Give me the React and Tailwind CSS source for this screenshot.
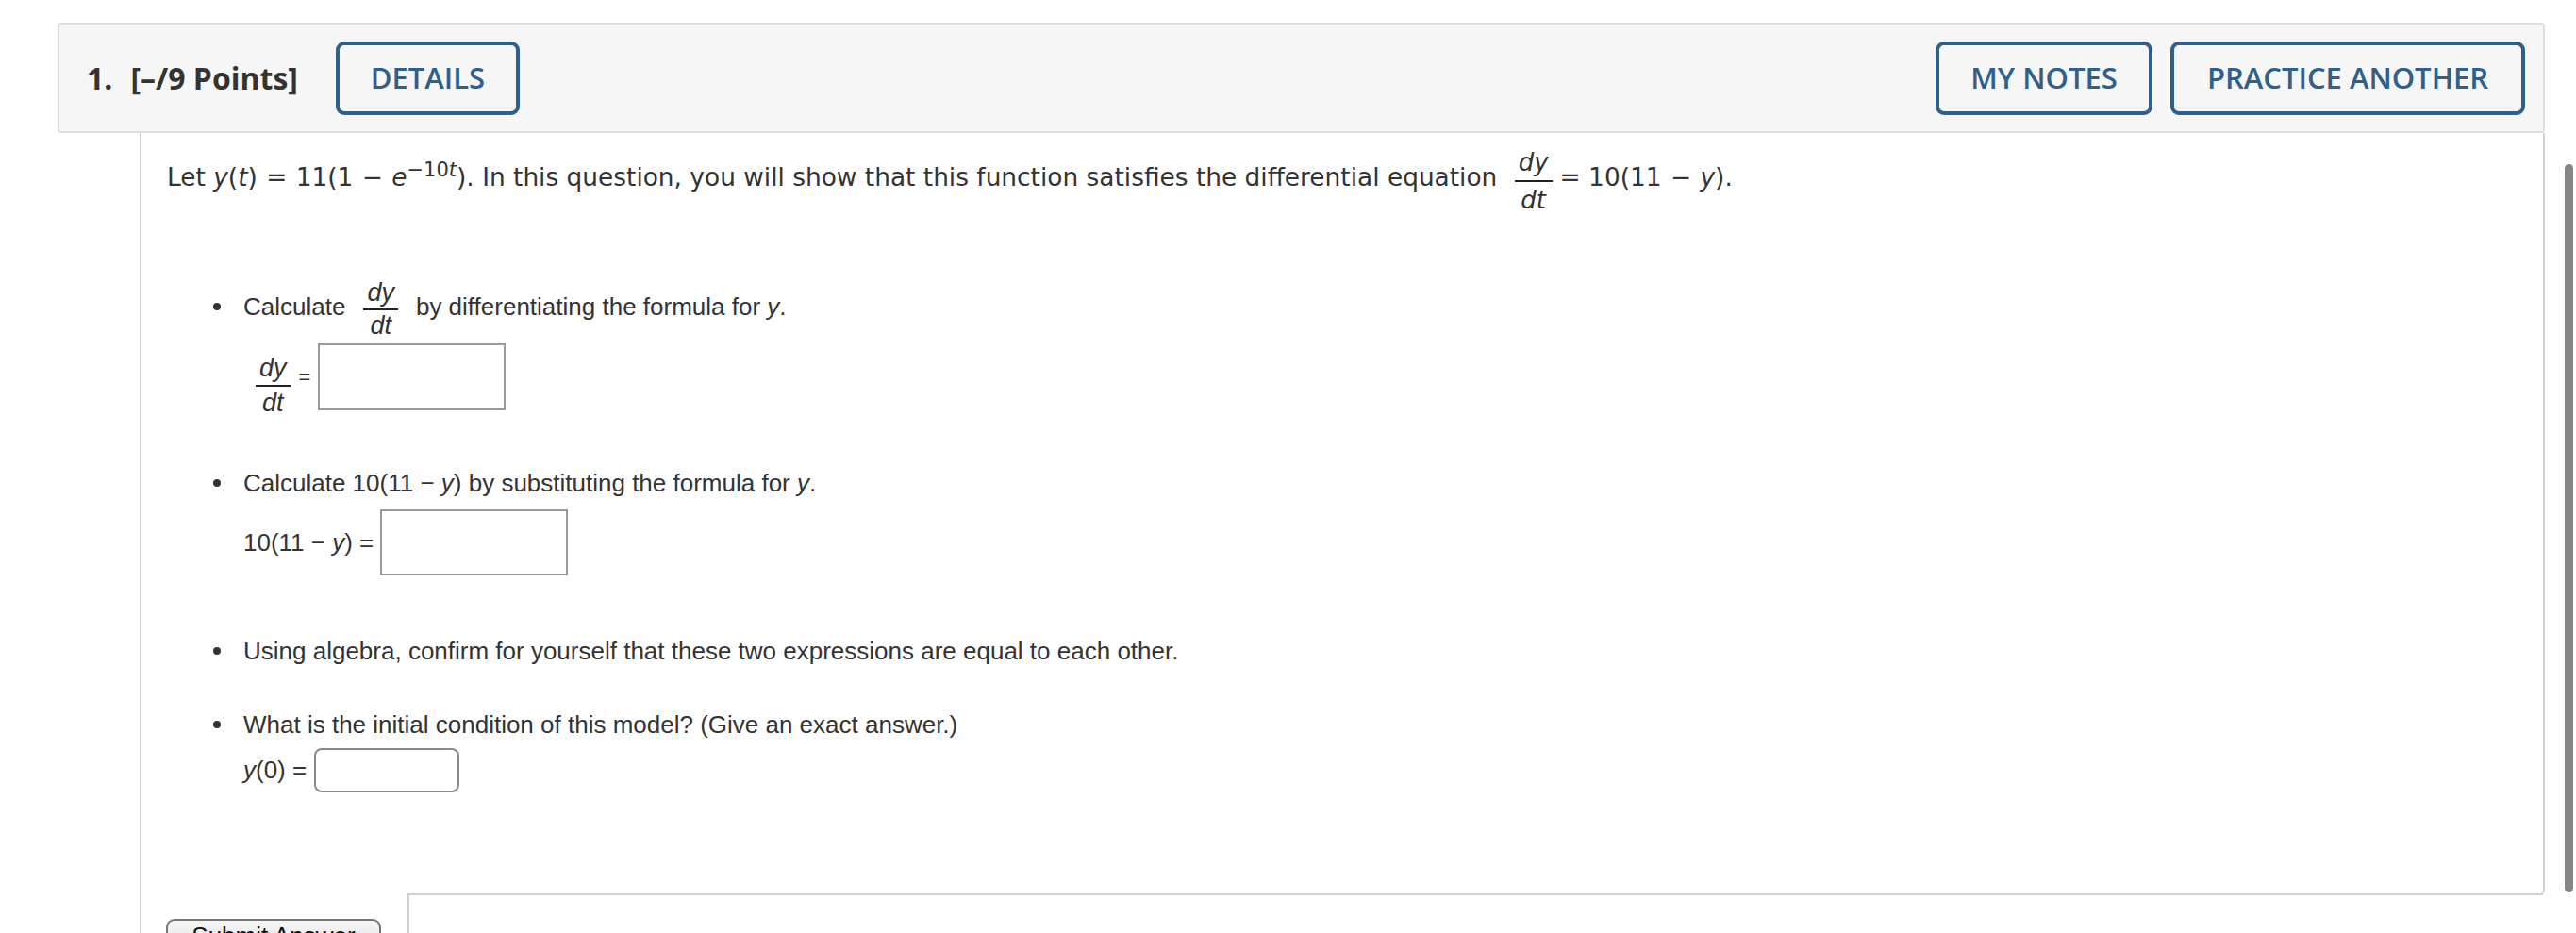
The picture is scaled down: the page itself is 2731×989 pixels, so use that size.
import React from 'react';

const sans = { fontFamily: '"Open Sans", "Noto Sans", sans-serif' };
const verdana = { fontFamily: '"DejaVu Sans", Verdana, sans-serif' };
const arial = { fontFamily: '"Liberation Sans", Arial, sans-serif' };

function Frac({ top = 'dy', bottom = 'dt', gap = 5, size }) {
  return (
    <span className={`inline-flex flex-col items-center ${size}`}>
      <span className="italic leading-none px-[4px]" style={{ paddingBottom: gap }}>{top}</span>
      <span className="h-[2px] w-full bg-[#222]" />
      <span className="italic leading-none px-[4px]" style={{ paddingTop: gap }}>{bottom}</span>
    </span>
  );
}

function Bullet({ children, className = '' }) {
  return (
    <div className={`flex items-center ${className}`}>
      <span className="mr-[24px] h-[8px] w-[8px] shrink-0 rounded-full bg-[#333]" />
      <div className="flex items-center">{children}</div>
    </div>
  );
}

function AnswerBox({ className }) {
  return <input type="text" className={`bg-white outline-none ${className}`} />;
}

export default function App() {
  return (
    <div className="relative h-[989px] w-[2731px] overflow-hidden bg-white text-[#333]">
      <div className="pl-[61px] pr-[33px] pt-[24px]">
        {/* question header */}
        <div
          className="flex h-[117px] items-center rounded-[4px] border-2 border-[#dedede] bg-[#f6f6f6] pl-[29px] pr-[19px]"
          style={sans}
        >
          <span className="text-[32px] font-bold text-[#333]">1.</span>
          <span className="ml-[19px] text-[32px] font-bold text-[#333]">[–/9 Points]</span>
          <button className="ml-[40px] h-[78px] w-[195px] rounded-[9px] border-4 border-[#2f5f8c] text-[31px] font-semibold text-[#2f5f8c]">
            DETAILS
          </button>
          <div className="ml-auto flex gap-[19px]">
            <button className="h-[78px] w-[230px] rounded-[9px] border-4 border-[#2f5f8c] text-[31px] font-semibold text-[#2f5f8c]">
              MY NOTES
            </button>
            <button className="h-[78px] w-[376px] rounded-[9px] border-4 border-[#2f5f8c] text-[31px] font-semibold text-[#2f5f8c]">
              PRACTICE ANOTHER
            </button>
          </div>
        </div>

        {/* question body */}
        <div className="ml-[87px]">
          <div className="rounded-br-[6px] border-l-2 border-r-2 border-[#cfcfcf]">
            <div className="pl-[27px] pt-[17px]">
              <div className="flex h-[60px] items-center text-[26.4px] text-[#333]" style={verdana}>
                <span className="whitespace-pre">
                  Let <i>y</i>(<i>t</i>)<span className="px-[1px]"> = </span>11(1<span className="px-[1px]"> − </span><i>e</i>
                  <sup className="text-[21px]">−10<i>t</i></sup>). In this question, you will show that this function satisfies the differential equation{' '}
                </span>
                <span className="ml-[10px] mr-[8px]">
                  <Frac gap={6} size="text-[26px]" />
                </span>
                <span className="whitespace-pre">
                  = 10(11<span className="px-[1px]"> − </span><i>y</i>).
                </span>
              </div>
            </div>

            <div className="pl-[76px] text-[26px] text-[#333]" style={arial}>
              <Bullet className="mt-[77px] h-[60px]">
                <span>Calculate</span>
                <span className="ml-[19px] mr-[19px]">
                  <Frac gap={3} size="text-[27px]" />
                </span>
                <span>
                  by differentiating the formula for <i>y</i>.
                </span>
              </Bullet>

              <div className="ml-[32px] mt-[9px] flex h-[71px] items-center">
                <span className="ml-[13px] mt-[12px]">
                  <Frac gap={4} size="text-[27px]" />
                </span>
                <span className="ml-[9px] text-[22px]">=</span>
                <AnswerBox className="ml-[8px] h-[71px] w-[199px] border-2 border-[#9a9a9a]" />
              </div>

              <Bullet className="mt-[57px] h-[40px]">
                <span>
                  Calculate 10(11 − <i>y</i>) by substituting the formula for <i>y</i>.
                </span>
              </Bullet>

              <div className="ml-[32px] mt-[8px] flex h-[70px] items-center">
                <span>
                  10(11 − <i>y</i>) =
                </span>
                <AnswerBox className="ml-[7px] h-[70px] w-[199px] border-2 border-[#9a9a9a]" />
              </div>

              <Bullet className="mt-[60px] h-[40px]">
                <span>Using algebra, confirm for yourself that these two expressions are equal to each other.</span>
              </Bullet>

              <Bullet className="mt-[38px] h-[40px]">
                <span>What is the initial condition of this model? (Give an exact answer.)</span>
              </Bullet>

              <div className="ml-[32px] mt-[5px] flex h-[47px] items-center">
                <span>
                  <i>y</i>(0) =
                </span>
                <AnswerBox className="ml-[8px] h-[47px] w-[154px] rounded-[8px] border-2 border-[#8a8a8a]" />
              </div>
            </div>

            <div className="mt-[107px] flex">
              <div className="w-[282px]" />
              <div className="flex-1 border-b-2 border-[#cfcfcf]" />
            </div>
          </div>

          <div className="flex border-l-2 border-[#cfcfcf]">
            <div className="w-[282px] pl-[26px] pt-[25px]">
              <button
                className="flex h-[44px] w-[228px] items-start justify-center rounded-[9px] border-2 border-[#777] bg-gradient-to-b from-[#f6f6f6] to-[#dcdcdc] pt-[3px] text-[26px] leading-none text-[#111]"
                style={arial}
              >
                Submit Answer
              </button>
            </div>
            <div className="h-[80px] flex-1 border-l-2 border-[#cfcfcf]" />
          </div>
        </div>
      </div>

      {/* page scrollbar */}
      <div className="absolute left-[2719px] top-[174px] h-[772px] w-[9px] rounded-full bg-[#858585]" />
    </div>
  );
}
